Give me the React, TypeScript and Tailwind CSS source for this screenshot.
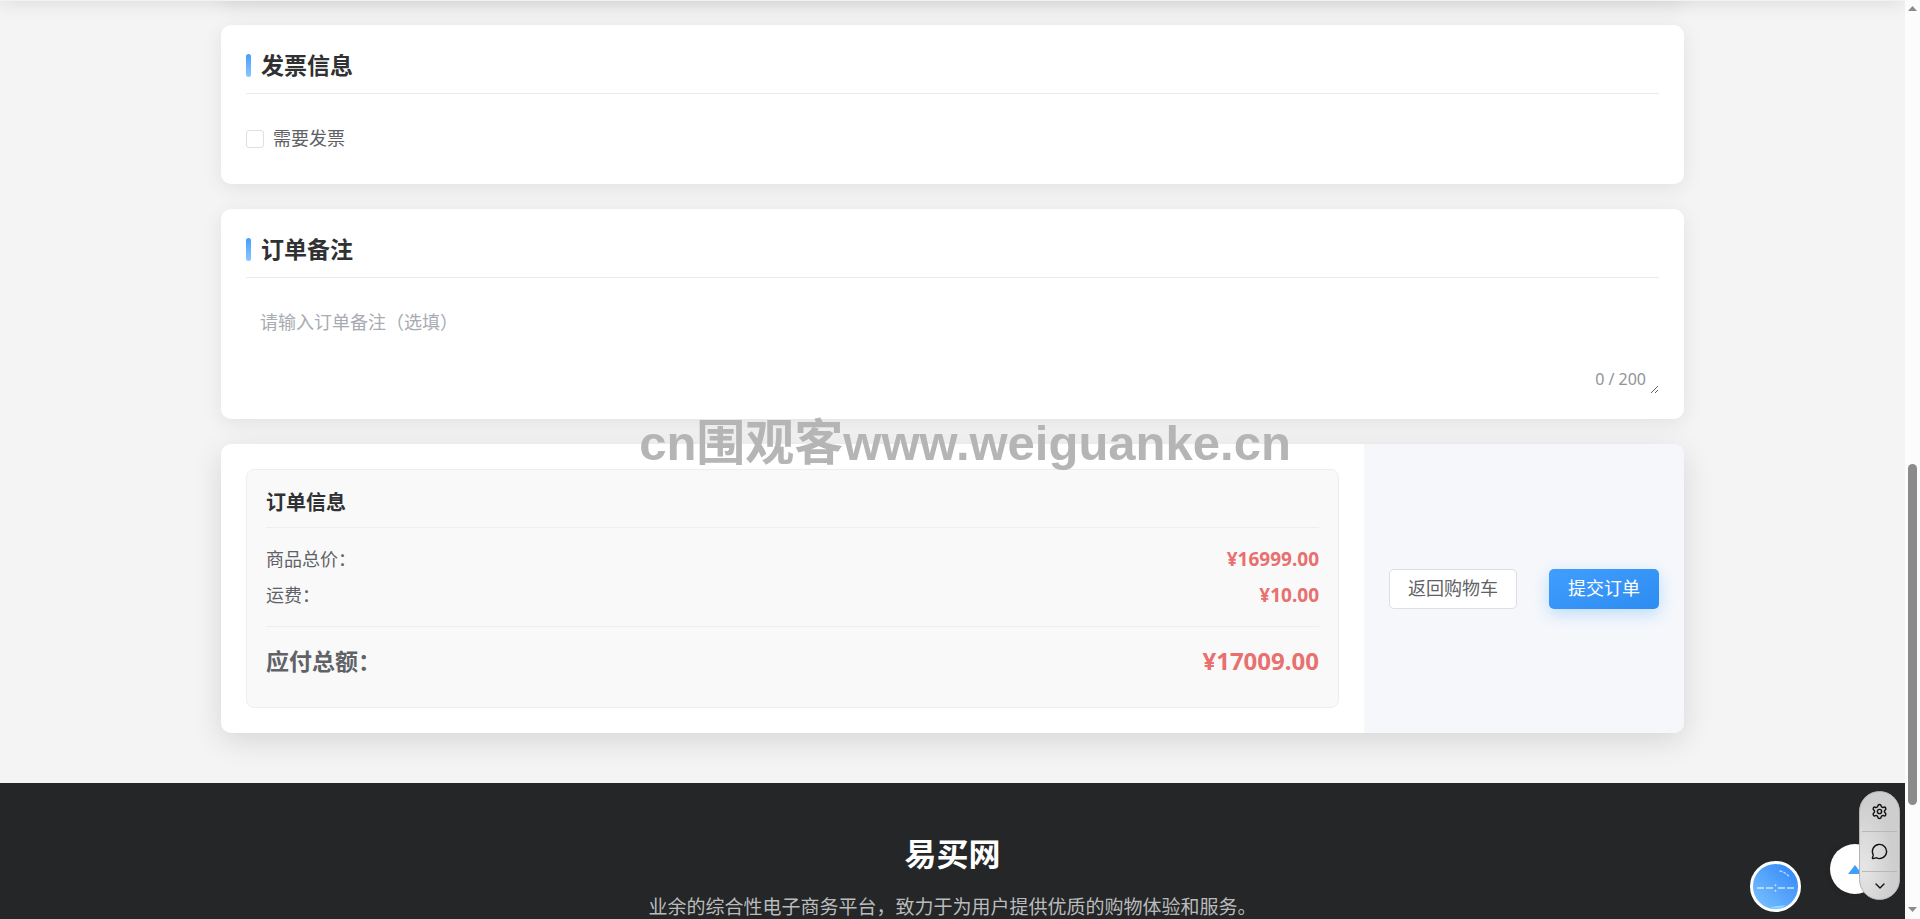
import { useState, type ReactNode } from "react";
import { MessageCircle, ChevronDown, Settings } from "lucide-react";

function Card({ title, children }: { title: string; children: ReactNode }) {
  return (
    <section className="rounded-[10px] bg-white p-[25px] shadow-[0_4px_20px_rgba(0,0,0,0.08)]">
      <h2 className="flex h-[44px] items-start gap-[10px] border-b border-[#ebebeb] text-[23px] leading-[30px] font-bold text-[#303133]">
        <span className="mt-[4px] h-[23px] w-[5px] rounded-[3px] bg-linear-to-b from-[#409eff] to-[#8cc5ff]" />
        {title}
      </h2>
      {children}
    </section>
  );
}

function Row({ label, value }: { label: string; value: string }) {
  return (
    <div className="flex h-[36px] items-center justify-between">
      <dt>{label}</dt>
      <dd className="text-[19px] font-bold text-[#e8706f]">{value}</dd>
    </div>
  );
}

export default function App() {
  const [note, setNote] = useState("");
  return (
    <div className="flex h-screen overflow-hidden bg-[#f4f4f4] font-['Noto_Sans','Noto_Sans_CJK_SC',sans-serif] text-[18px] text-[#606266]">
      <div className="relative flex min-w-0 flex-1 flex-col overflow-hidden">
        <header className="relative z-10 -mt-[60px] h-[61px] shrink-0 bg-[#f2f2f2] shadow-[0_2px_20px_rgba(0,0,0,0.1)]" />
        <main className="mx-auto flex w-[76.8%] shrink-0 flex-col gap-[25px] pb-[50px]">
          <div className="-mt-[61px] h-[60px] rounded-[10px] bg-white shadow-[0_4px_20px_rgba(0,0,0,0.08)]" />

          <Card title="发票信息">
            <label className="mt-[27px] mb-[3px] flex h-[35px] items-center gap-[9px]">
              <input
                type="checkbox"
                className="size-[18px] appearance-none rounded-[3px] border border-[#dcdfe6] bg-white checked:bg-[#409eff]"
              />
              需要发票
            </label>
          </Card>

          <Card title="订单备注">
            <div className="relative mt-[23px]">
              <textarea
                aria-label="订单备注"
                placeholder="请输入订单备注（选填）"
                maxLength={200}
                value={note}
                onChange={(e) => setNote(e.target.value)}
                className="block h-[93px] w-full resize-y bg-white px-[14px] py-[8px] leading-[27px] outline-none placeholder:text-[#a8abb2]"
              />
              <span className="absolute right-[13px] bottom-[5px] text-[16px] leading-[20px] text-[#909399]">
                {note.length} / 200
              </span>
            </div>
          </Card>

          <section className="flex overflow-hidden rounded-[10px] bg-white shadow-[0_8px_30px_rgba(0,0,0,0.12)]">
            <div className="min-w-0 flex-1 p-[25px]">
              <div className="rounded-[8px] border border-[#ebeef5] bg-[#f9f9f9] px-[19px] pt-[18px] pb-[9px]">
                <h3 className="h-[40px] border-b border-[#ebeef5] text-[20px] leading-[29px] font-bold text-[#303133]">
                  订单信息
                </h3>
                <dl>
                  <div className="pt-[13px] pb-[13px]">
                    <Row label="商品总价：" value="¥16999.00" />
                    <Row label="运费：" value="¥10.00" />
                  </div>
                  <div className="flex h-[72px] items-center justify-between border-t border-[#ebeef5] pb-[3px] font-bold">
                    <dt className="text-[23px]">应付总额：</dt>
                    <dd className="text-[24px] text-[#e8706f]">¥17009.00</dd>
                  </div>
                </dl>
              </div>
            </div>
            <div className="flex w-[320px] items-center justify-between bg-[#f5f7fb] px-[25px]">
              <button className="h-[40px] rounded-[5px] border border-[#dcdfe6] bg-white px-[18px] pb-[2px] leading-[36px]">
                返回购物车
              </button>
              <button className="h-[40px] rounded-[5px] bg-linear-to-br from-[#409eff] to-[#2d8cf0] px-[19px] pb-[2px] leading-[36px] text-white shadow-[0_5px_15px_rgba(64,158,255,0.3)]">
                提交订单
              </button>
            </div>
          </section>
        </main>

        <footer className="flex flex-1 shrink-0 flex-col items-center bg-[#242628] pt-[49px]">
          <h2 className="text-[32px] leading-[44px] font-bold text-white">易买网</h2>
          <p className="mt-[16px] text-[19px] leading-[30px] whitespace-nowrap text-[#bbbbbb]">
            业余的综合性电子商务平台，致力于为用户提供优质的购物体验和服务。
          </p>
        </footer>

        <div className="pointer-events-none absolute inset-x-0 top-[407px] z-20 pl-[25px] text-center font-['Liberation_Sans','Noto_Sans_CJK_SC',sans-serif] text-[49px] leading-[72px] font-bold whitespace-nowrap text-[#b5b5b5]">
          cn围观客www.weiguanke.cn
        </div>

        <button
          aria-label="助手"
          className="absolute right-[104px] bottom-[7px] size-[51px] overflow-hidden rounded-full border-[3px] border-white bg-linear-to-bl from-[#2d83f7] to-[#7cc4ff]"
        >
          <svg viewBox="0 0 45 45" className="size-full" fill="none" stroke="#fff">
            <path d="M4 24h7M13 24h7M25 24h7M34 24h7" strokeWidth="1.6" opacity=".7" />
            <path d="M22.500 20.500v1.500M22.500 26v1.500" strokeWidth="1.500" opacity=".8" />
            <path d="M26.500 7c4 .5 7 2.500 9.500 5.500" strokeWidth="1.300" strokeDasharray="3 1" opacity=".6" />
            <path d="M15 45c4-3 12-3.500 18-3.500l-5 2.500z" fill="#8fd8ff" stroke="none" />
          </svg>
        </button>
        <button
          aria-label="返回顶部"
          className="absolute right-[25px] bottom-[25px] flex size-[50px] items-center justify-center rounded-full bg-white shadow-[0_0_6px_rgba(0,0,0,0.12)]"
        >
          <svg viewBox="0 0 14 9" className="h-[9px] w-[14px]" fill="#409eff">
            <path d="M7 0l7 9H0z" />
          </svg>
        </button>
        <div className="absolute right-[5px] bottom-[19px] flex h-[109px] w-[41px] flex-col items-stretch rounded-full border border-[#b4b4b4] bg-[#cecece] bg-radial-[at_10%_70%] from-[#e6e6e6] to-[#cecece] to-60% px-[2px] text-[#111]">
          <button aria-label="设置" className="flex h-[40px] items-center justify-center border-b border-[#b8b8b8]">
            <Settings className="size-[17px]" />
          </button>
          <button aria-label="消息" className="flex h-[40px] items-center justify-center border-b border-[#b8b8b8]">
            <MessageCircle className="size-[17px]" />
          </button>
          <button aria-label="收起" className="flex flex-1 items-center justify-center">
            <ChevronDown className="size-[16px]" />
          </button>
        </div>
      </div>

      <div aria-hidden="true" className="flex w-[15px] shrink-0 flex-col items-center bg-[#fcfcfc]">
        <svg viewBox="0 0 9 5" className="mt-[6px] h-[5px] w-[9px]" fill="#8b8b8b">
          <path d="M4.500 0L9 5H0z" />
        </svg>
        <div className="grow-[453]" />
        <div className="w-[9px] grow-[341] rounded-full bg-[#8b8b8b]" />
        <div className="grow-[102]" />
        <svg viewBox="0 0 9 5" className="mb-[7px] h-[5px] w-[9px]" fill="#8b8b8b">
          <path d="M4.500 5L9 0H0z" />
        </svg>
      </div>
    </div>
  );
}
